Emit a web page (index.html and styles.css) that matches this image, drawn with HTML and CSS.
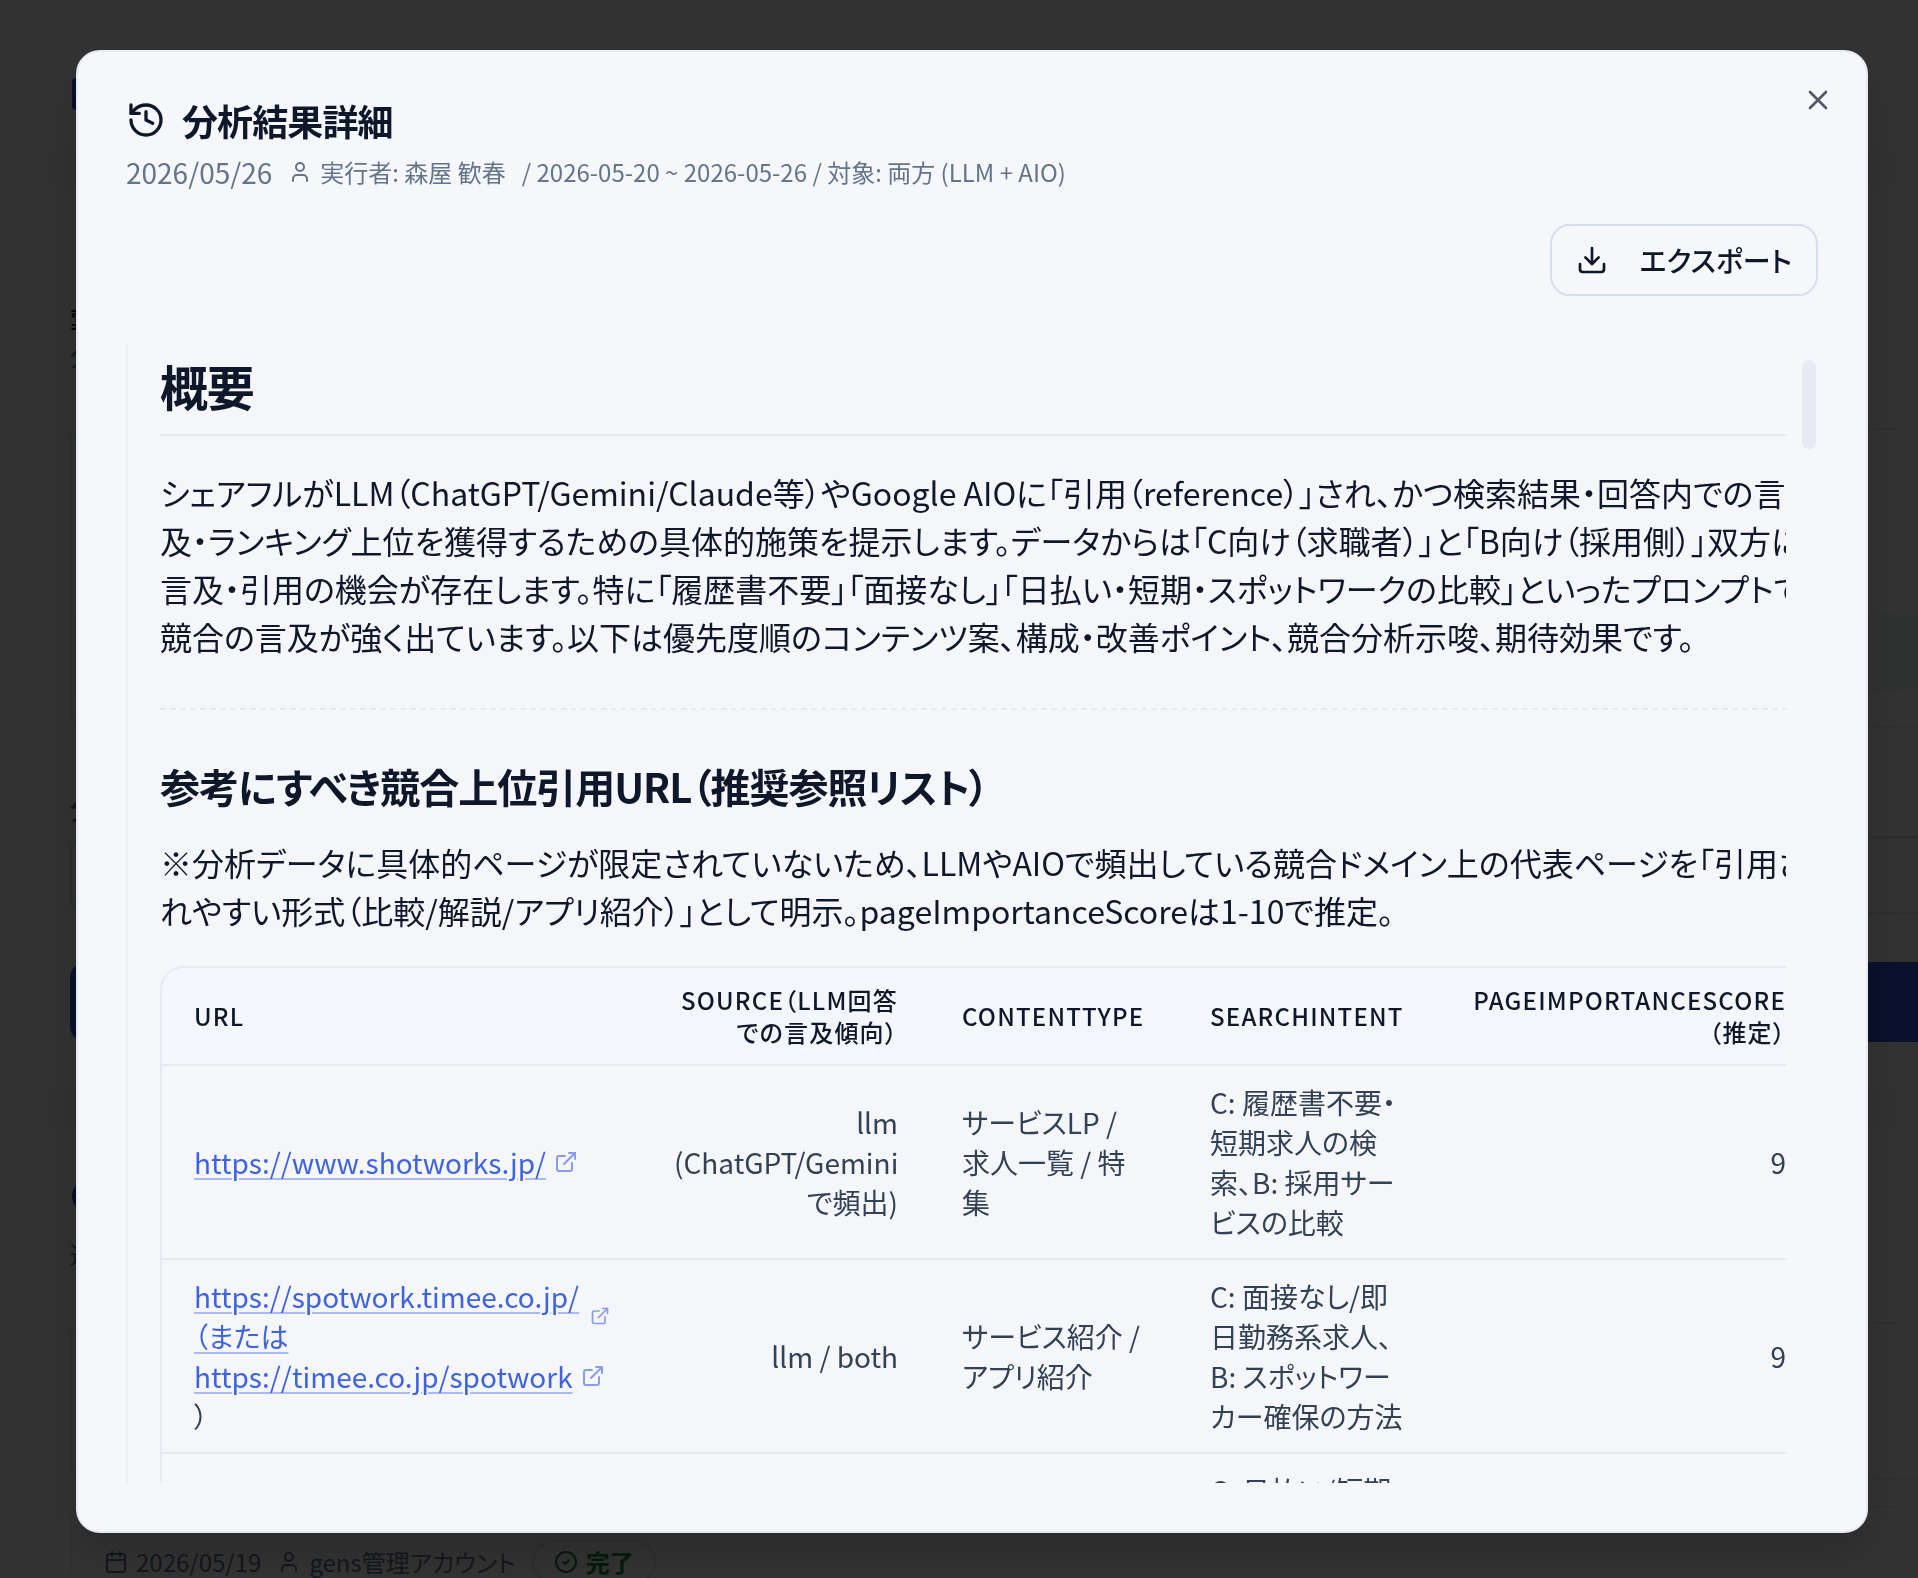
FILE: index.html
```html
<!DOCTYPE html>
<html lang="ja">
<head>
<meta charset="utf-8">
<meta name="viewport" content="width=device-width, initial-scale=1">
<title>分析結果詳細</title>
<link rel="stylesheet" href="styles.css">
</head>
<body>
<svg class="sprite" aria-hidden="true">
  <symbol id="i-user" viewBox="0 0 24 24"><path d="M19 21v-2a4 4 0 0 0-4-4H9a4 4 0 0 0-4 4v2"/><circle cx="12" cy="7" r="4"/></symbol>
  <symbol id="i-link" viewBox="0 0 24 24"><path d="M15 3h6v6"/><path d="M10 14 21 3"/><path d="M18 13v6a2 2 0 0 1-2 2H5a2 2 0 0 1-2-2V8a2 2 0 0 1 2-2h6"/></symbol>
</svg>

<main class="page" aria-hidden="true">
  <section class="card card-head"><span class="brand"></span></section>
  <section class="card card-form">
    <p class="form-title">彙</p>
    <p class="form-note">分</p>
    <div class="box box-tall"><div class="box-band"></div></div>
    <p class="form-label">分</p>
    <div class="box box-input"></div>
    <div class="submit"></div>
  </section>
  <section class="card card-list">
    <span class="brand brand-round"></span>
    <p class="form-note list-note">過</p>
    <div class="box box-item"></div>
    <div class="box box-row">
      <svg class="icon i24" viewBox="0 0 24 24"><path d="M8 2v4M16 2v4"/><rect x="3" y="4" width="18" height="18" rx="2"/><path d="M3 10h18"/></svg>
      <span>2026/05/19</span>
      <svg class="icon i24 row-user"><use href="#i-user"/></svg>
      <span>gens管理アカウント</span>
      <span class="badge"><svg class="icon i24" viewBox="0 0 24 24"><circle cx="12" cy="12" r="10"/><path d="m9 12 2 2 4-4"/></svg>完了</span>
    </div>
  </section>
</main>

<div class="overlay">
  <div class="dialog" role="dialog" aria-modal="true" aria-labelledby="dialog-title">
    <header class="dialog-header">
      <h2 class="dialog-title" id="dialog-title">
        <svg class="icon i40" viewBox="0 0 24 24"><path d="M3 12a9 9 0 1 0 9-9 9.75 9.75 0 0 0-6.740 2.740L3 8"/><path d="M3 3v5h5"/><path d="M12 7v5l4 2"/></svg>
        <span>分析結果詳細</span>
      </h2>
      <div class="dialog-meta">
        <span class="meta-date">2026/05/26</span>
        <span class="meta-user"><svg class="icon i24"><use href="#i-user"/></svg>実行者: 森屋 歓春</span>
        <span>/ 2026-05-20 ~ 2026-05-26 / 対象: 両方 (LLM + AIO)</span>
      </div>
    </header>
    <div class="toolbar">
      <button class="export" type="button">
        <svg class="icon i32" viewBox="0 0 24 24"><path d="M12 15V3"/><path d="M21 15v4a2 2 0 0 1-2 2H5a2 2 0 0 1-2-2v-4"/><path d="m7 10 5 5 5-5"/></svg>
        エクスポート
      </button>
    </div>
    <div class="scroll-area">
      <div class="viewport">
        <article class="prose">
          <h1>概要</h1>
          <p>シェアフルがLLM（ChatGPT/Gemini/Claude等）やGoogle AIOに「引用（reference）」され、かつ検索結果・回答内での言及・ランキング上位を獲得するための具体的施策を提示します。データからは「C向け（求職者）」と「B向け（採用側）」双方に言及・引用の機会が存在します。特に「履歴書不要」「面接なし」「日払い・短期・スポットワークの比較」といったプロンプトで競合の言及が強く出ています。以下は優先度順のコンテンツ案、構成・改善ポイント、競合分析示唆、期待効果です。</p>
          <hr>
          <h2>参考にすべき競合上位引用URL（推奨参照リスト）</h2>
          <p>※分析データに具体的ページが限定されていないため、LLMやAIOで頻出している競合ドメイン上の代表ページを「引用されやすい形式（比較/解説/アプリ紹介）」として明示。pageImportanceScoreは1-10で推定。</p>
          <div class="table-wrap">
            <table>
              <colgroup><col class="c-url"><col class="c-source"><col class="c-type"><col class="c-intent"><col class="c-score"></colgroup>
              <thead>
                <tr><th>url</th><th class="num">source（LLM回答での言及傾向）</th><th>contentType</th><th>searchIntent</th><th class="num">pageImportanceScore（推定）</th></tr>
              </thead>
              <tbody>
                <tr>
                  <td><a class="link" href="https://www.shotworks.jp/"><span>https://www.shotworks.jp/</span><svg class="icon i24"><use href="#i-link"/></svg></a></td>
                  <td class="num">llm (ChatGPT/Geminiで頻出)</td>
                  <td>サービスLP / 求人一覧 / 特集</td>
                  <td>C: 履歴書不要・短期求人の検索、B: 採用サービスの比較</td>
                  <td class="num">9</td>
                </tr>
                <tr>
                  <td><a class="link link-wrap" href="https://spotwork.timee.co.jp/"><span>https://spotwork.timee.co.jp/<wbr>（または</span><svg class="icon i20"><use href="#i-link"/></svg></a> <a class="link" href="https://timee.co.jp/spotwork"><span>https://timee.co.jp/spotwork</span><svg class="icon i24"><use href="#i-link"/></svg></a><br>）</td>
                  <td class="num">llm / both</td>
                  <td>サービス紹介 / アプリ紹介</td>
                  <td>C: 面接なし/即日勤務系求人、B: スポットワーカー確保の方法</td>
                  <td class="num">9</td>
                </tr>
                <tr><td></td><td></td><td></td><td>C: 日払い/短期</td><td></td></tr>
              </tbody>
            </table>
          </div>
        </article>
      </div>
      <div class="scrollbar"><div class="thumb"></div></div>
    </div>
    <button class="close" type="button" aria-label="閉じる"><svg class="icon i32" viewBox="0 0 24 24"><path d="M18 6 6 18"/><path d="m6 6 12 12"/></svg></button>
  </div>
</div>
</body>
</html>
```

FILE: styles.css
```css
* { box-sizing: border-box; margin: 0; padding: 0; }

body {
  height: 100vh;
  overflow: hidden;
  background: #f9fafb;
  color: #0f172a;
  font-family: "Noto Sans CJK JP", sans-serif;
  font-size: 24px;
  line-height: 32px;
  font-feature-settings: "palt";
}

.sprite { display: none; }

.icon {
  flex: none;
  fill: none;
  stroke: currentColor;
  stroke-width: 2;
  stroke-linecap: round;
  stroke-linejoin: round;
}
.i20 { width: 20px; height: 20px; }
.i24 { width: 24px; height: 24px; }
.i32 { width: 32px; height: 32px; }
.i40 { width: 40px; height: 40px; }

/* Page behind the dialog */
.page {
  display: flex;
  flex-direction: column;
  gap: 32px;
  height: 100%;
  padding: 40px 0 0 20px;
  overflow: hidden;
}
.card {
  flex: none;
  padding: 0 0 0 48px;
  border: 2px solid #f6f7f8;
  border-right: 0;
  border-radius: 24px 0 0 24px;
  background: #fbfbfc;
}
.card-head { height: 112px; padding-top: 36px; }
.card-form { height: 908px; padding-top: 110px; }
.card-list { flex: 1; min-height: 0; padding-top: 54px; border-bottom: 0; border-radius: 24px 0 0 0; }
.brand { display: block; width: 32px; height: 32px; margin-left: 2px; border-radius: 4px; background: #2f4fd8; }
.brand-round { border-radius: 16px; }
.form-title, .form-label { font-size: 28px; line-height: 40px; font-weight: 500; }
.form-note, .form-label { color: #64748b; }
.form-note { line-height: 40px; }
.list-note { margin-top: 22px; }
.box { border: 2px solid #eef0f3; border-right: 0; border-radius: 16px 0 0 16px; }
.box-tall { height: 300px; margin-top: 52px; padding-top: 184px; }
.box-band { height: 78px; background: #f0f6f2; }
.form-label { margin-top: 60px; }
.box-input { height: 78px; margin-top: 8px; border-color: #dbe0e6; }
.submit { height: 80px; margin-top: 48px; border-radius: 16px 0 0 16px; background: #3753d9; }
.box-item { height: 158px; margin-top: 48px; }
.box-row {
  display: flex;
  align-items: center;
  gap: 8px;
  height: 160px;
  margin-top: 26px;
  padding: 0 32px 48px;
  color: #64748b;
}
.row-user { margin-left: 8px; }
.badge {
  display: flex;
  align-items: center;
  gap: 8px;
  height: 44px;
  margin-left: 8px;
  padding: 0 20px;
  border: 2px solid #dcefe2;
  border-radius: 22px;
  color: #15803d;
  font-weight: 600;
}

/* Dialog */
.overlay {
  position: fixed;
  inset: 0;
  padding: 50px 50px 45px 76px;
  background: rgba(0, 0, 0, 0.8);
}
.dialog {
  position: relative;
  display: flex;
  flex-direction: column;
  height: 100%;
  padding: 48px;
  border: 2px solid #e8eaf3;
  border-radius: 24px;
  background: #f5f7fb;
  box-shadow: 0 20px 50px rgba(0, 0, 0, 0.2);
}
.dialog-header { display: flex; flex-direction: column; gap: 12px; }
.dialog-title {
  display: flex;
  align-items: center;
  gap: 16px;
  font-size: 36px;
  line-height: 40px;
  font-weight: 600;
  letter-spacing: -0.025em;
}
.dialog-meta {
  display: flex;
  align-items: center;
  gap: 16px;
  color: #64748b;
  line-height: 40px;
}
.meta-date { font-size: 28px; }
.meta-user { display: flex; align-items: center; gap: 8px; }
.toolbar { display: flex; justify-content: flex-end; margin: 32px 0 48px; }
.export {
  display: flex;
  align-items: center;
  gap: 32px;
  height: 72px;
  padding: 0 24px;
  border: 2px solid #d7dde7;
  border-radius: 20px;
  background: transparent;
  color: inherit;
  font: inherit;
  font-feature-settings: inherit;
  font-size: 28px;
  font-weight: 500;
}
.close {
  position: absolute;
  top: 32px;
  right: 32px;
  display: flex;
  border: 0;
  background: none;
  color: inherit;
  opacity: 0.7;
}

.scroll-area { display: flex; flex: 1; min-height: 0; gap: 12px; }
.viewport { flex: 1; min-width: 0; overflow: hidden; }
.scrollbar { width: 20px; padding: 16px 2px 0 4px; }
.thumb { height: 89px; border-radius: 7px; background: #e7eaf2; }

/* Report */
.prose {
  width: calc(100% + 56px);
  padding: 12px 32px;
  border: 2px solid #eff0f4;
  border-top: 0;
  background: #f5f6fa;
  font-size: 32px;
  line-height: 48px;
}
.prose h1 {
  padding-bottom: 20px;
  border-bottom: 2px solid #e7e9f0;
  font-size: 48px;
  line-height: 58px;
  font-weight: 700;
  letter-spacing: -0.025em;
}
.prose h1 + p { margin-top: 32px; }
.prose hr { margin: 48px 0; border: 0; border-top: 2px dashed #e7e9ee; }
.prose h2 {
  margin-bottom: 24px;
  font-size: 40px;
  line-height: 56px;
  font-weight: 700;
  letter-spacing: -0.025em;
}
.table-wrap {
  width: max-content;
  margin-top: 32px;
  border: 2px solid #e7e9f0;
  border-radius: 24px;
  overflow: hidden;
}
table { width: 1656px; table-layout: fixed; border-collapse: separate; border-spacing: 0; }
.c-url { width: 480px; }
.c-source { width: 288px; }
.c-type { width: 248px; }
.c-intent { width: 260px; }
.c-score { width: 380px; }
th, td { padding: 16px 32px; border-bottom: 2px solid #e7e9f0; text-align: left; vertical-align: middle; }
th {
  background: #f3f6fb;
  font-size: 24px;
  line-height: 32px;
  font-weight: 500;
  letter-spacing: 0.05em;
  text-transform: uppercase;
}
td { color: #334155; font-size: 28px; line-height: 40px; }
.num { text-align: right; }
.link {
  display: inline-flex;
  align-items: center;
  gap: 8px;
  color: #3f63e0;
  text-decoration: none;
  vertical-align: top;
}
.link span {
  text-decoration: underline;
  text-decoration-color: #a9b9f1;
  text-decoration-thickness: 2px;
  text-underline-offset: 4px;
}
.link-wrap span { flex: 1; }
.link .icon { opacity: 0.6; }
```
